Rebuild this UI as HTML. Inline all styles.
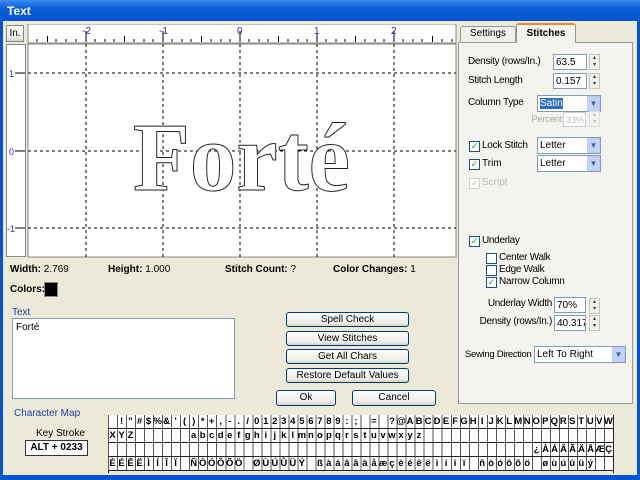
<!DOCTYPE html>
<html><head><meta charset="utf-8"><style>
*{margin:0;padding:0;box-sizing:border-box}
body{width:640px;height:480px;overflow:hidden;background:#ece9d8;font-family:"Liberation Sans",sans-serif;font-size:10px;color:#000;position:relative}
.a{position:absolute}
.n{letter-spacing:-0.3px;white-space:nowrap}
.title{left:0;top:0;width:640px;height:21px;background:linear-gradient(#3d8cf0,#0a5ed8 40%,#0654d0);color:#fff;font-weight:bold;font-size:12px;padding:4px 0 0 7px}
.bl{background:#0654d0}
.btn{position:absolute;border:1px solid #003c74;border-radius:3px;background:linear-gradient(#fff,#ecebe6 80%,#d6d0c5);text-align:center;font-size:10px;line-height:13px}
.inp{position:absolute;background:#fff;border:1px solid #7f9db9;font-size:10px;padding:1px 2px;line-height:13px;white-space:nowrap;overflow:hidden}
.cb{position:absolute;width:11px;height:11px;border:1px solid #1c5180;background:#fff;font-size:9px;line-height:9px;color:#21a121;text-align:center}
.dd{position:absolute;width:13px;height:15px;background:#c1d3fb;border:1px solid #b9cdf7;color:#4d6185;font-size:8px;text-align:center;line-height:13px}
.sp{position:absolute;width:11px;height:16px;border:1px solid #c8c5b8;background:#f3f2ee;font-size:6px;line-height:7px;text-align:center;color:#333}
.row{position:absolute;left:108px;width:505px;height:14px;border-bottom:1px solid #222;background:repeating-linear-gradient(90deg,#555 0 1px,#fff 1px 9.02px);font-family:"Liberation Sans",sans-serif;font-weight:bold;font-size:9.5px;line-height:13px;white-space:pre}
.row span{display:inline-block;width:9.02px;text-align:center}
</style></head><body>
<div class="a title">Text</div>
<div class="a bl" style="left:0;top:21px;width:3px;height:459px"></div>
<div class="a bl" style="left:637px;top:21px;width:3px;height:459px"></div>
<div class="a bl" style="left:0;top:475px;width:640px;height:5px"></div>

<div class="btn" style="left:6px;top:25px;width:18px;height:17px;border-color:#888;border-radius:0;font-size:10px;line-height:15px">In.</div>
<svg class="a" style="left:26px;top:24px" width="432" height="234">
<rect x="2" y="0" width="428" height="19" fill="#fff" stroke="#888"/>
<rect x="2" y="20" width="428" height="213" fill="#fff" stroke="#888"/>
<g stroke="#000" stroke-width="1">
<path d="M60 18v-11M137 18v-11M214 18v-11M291 18v-11M368 18v-11M21.5 18v-6M98.5 18v-6M175.5 18v-6M252.5 18v-6M329.5 18v-6M406.5 18v-6"/>
<path d="M11 18v-3M30 18v-3M40 18v-3M50 18v-3M69 18v-3M79 18v-3M88 18v-3M108 18v-3M118 18v-3M127 18v-3M146 18v-3M156 18v-3M165 18v-3M185 18v-3M195 18v-3M204 18v-3M223 18v-3M233 18v-3M242 18v-3M262 18v-3M272 18v-3M281 18v-3M300 18v-3M310 18v-3M319 18v-3M339 18v-3M349 18v-3M358 18v-3M377 18v-3M387 18v-3M396 18v-3M416 18v-3M426 18v-3"/>
</g>
<g fill="#2030a0" font-size="10" font-family="Liberation Sans"><text x="56" y="10">-2</text><text x="133" y="10">-1</text><text x="211" y="10">0</text><text x="288" y="10">1</text><text x="365" y="10">2</text></g>
<g stroke="#000" stroke-dasharray="3,3"><path d="M60 20v213M137 20v213M214 20v213M291 20v213M368 20v213M2 49h428M2 127h428M2 204h428"/></g>
<text x="107" y="166" font-family="Liberation Serif" font-weight="bold" font-size="98" fill="#fff" stroke="#222" stroke-width="1" textLength="217" lengthAdjust="spacingAndGlyphs">Forté</text>
</svg>
<svg class="a" style="left:6px;top:44px" width="20" height="214">
<rect x="0.5" y="0.5" width="19" height="212" fill="#fff" stroke="#888"/>
<g stroke="#000"><path d="M19 29h-10M19 107h-10M19 184h-10"/></g>
<g fill="#2030a0" font-size="9"><text x="3" y="33">1</text><text x="3" y="111">0</text><text x="1" y="188">-1</text></g>
</svg>

<div class="a" style="left:10px;top:264px;font-weight:bold">Width:<span style="font-weight:normal"> 2.769</span></div>
<div class="a" style="left:108px;top:264px;font-weight:bold">Height:<span style="font-weight:normal"> 1.000</span></div>
<div class="a" style="left:225px;top:264px;font-weight:bold">Stitch Count:<span style="font-weight:normal"> ?</span></div>
<div class="a" style="left:333px;top:264px;font-weight:bold">Color Changes:<span style="font-weight:normal"> 1</span></div>
<div class="a" style="left:10px;top:284px;font-weight:bold">Colors:</div>
<div class="a" style="left:44px;top:282px;width:14px;height:15px;background:#000;border:1px solid #888"></div>
<div class="a" style="left:12px;top:307px;color:#2040a0">Text</div>
<div class="inp" style="left:12px;top:318px;width:223px;height:81px;padding:2px 3px">Forté</div>

<div class="btn" style="left:286px;top:312px;width:123px;height:15px">Spell Check</div>
<div class="btn" style="left:286px;top:331px;width:123px;height:15px">View Stitches</div>
<div class="btn" style="left:286px;top:349px;width:123px;height:15px">Get All Chars</div>
<div class="btn" style="left:286px;top:368px;width:123px;height:15px">Restore Default Values</div>
<div class="btn" style="left:276px;top:390px;width:60px;height:16px">Ok</div>
<div class="btn" style="left:352px;top:390px;width:84px;height:16px">Cancel</div>

<div class="a" style="left:14px;top:408px;color:#2040a0">Character Map</div>
<div class="a" style="left:36px;top:428px">Key Stroke</div>
<div class="a" style="left:25px;top:440px;width:63px;height:16px;background:#fff;border:1px solid #333;text-align:center;font-weight:bold;line-height:14px">ALT + 0233</div>

<div class="a" style="left:108px;top:415px;width:506px;height:58px;border:1px solid #222;border-bottom:none"></div>
<div class="row" style="top:415px"><span> </span><span>!</span><span>"</span><span>#</span><span>$</span><span>%</span><span>&amp;</span><span>'</span><span>(</span><span>)</span><span>*</span><span>+</span><span>,</span><span>-</span><span>.</span><span>/</span><span>0</span><span>1</span><span>2</span><span>3</span><span>4</span><span>5</span><span>6</span><span>7</span><span>8</span><span>9</span><span>:</span><span>;</span><span> </span><span>=</span><span> </span><span>?</span><span>@</span><span>A</span><span>B</span><span>C</span><span>D</span><span>E</span><span>F</span><span>G</span><span>H</span><span>I</span><span>J</span><span>K</span><span>L</span><span>M</span><span>N</span><span>O</span><span>P</span><span>Q</span><span>R</span><span>S</span><span>T</span><span>U</span><span>V</span><span>W</span></div>
<div class="row" style="top:429px"><span>X</span><span>Y</span><span>Z</span><span> </span><span> </span><span> </span><span> </span><span> </span><span> </span><span>a</span><span>b</span><span>c</span><span>d</span><span>e</span><span>f</span><span>g</span><span>h</span><span>i</span><span>j</span><span>k</span><span>l</span><span>m</span><span>n</span><span>o</span><span>p</span><span>q</span><span>r</span><span>s</span><span>t</span><span>u</span><span>v</span><span>w</span><span>x</span><span>y</span><span>z</span></div>
<div class="row" style="top:443px"><span style="margin-left:424px">¿</span><span>À</span><span>Á</span><span>Â</span><span>Ã</span><span>Ä</span><span>Å</span><span>Æ</span><span>Ç</span></div>
<div class="row" style="top:457px"><span>È</span><span>É</span><span>Ê</span><span>Ë</span><span>Ì</span><span>Í</span><span>Î</span><span>Ï</span><span> </span><span>Ñ</span><span>Ò</span><span>Ó</span><span>Ô</span><span>Õ</span><span>Ö</span><span> </span><span>Ø</span><span>Ù</span><span>Ú</span><span>Û</span><span>Ü</span><span>Ý</span><span> </span><span>ß</span><span>à</span><span>á</span><span>â</span><span>ã</span><span>ä</span><span>å</span><span>æ</span><span>ç</span><span>è</span><span>é</span><span>ê</span><span>ë</span><span>ì</span><span>í</span><span>î</span><span>ï</span><span> </span><span>ñ</span><span>ò</span><span>ó</span><span>ô</span><span>õ</span><span>ö</span><span> </span><span>ø</span><span>ù</span><span>ú</span><span>û</span><span>ü</span><span>ý</span></div>

<!-- right panel -->
<div class="a" style="left:458px;top:42px;width:175px;height:362px;border:1px solid #919b9c;background:#f4f3ee"></div>
<div class="a" style="left:460px;top:26px;width:56px;height:16px;border:1px solid #919b9c;border-bottom:none;border-radius:3px 3px 0 0;background:#f0efe9;text-align:center;line-height:14px">Settings</div>
<div class="a" style="left:516px;top:23px;width:60px;height:20px;border:1px solid #919b9c;border-top:2px solid #e68b2c;border-bottom:none;border-radius:3px 3px 0 0;background:#f4f3ee;text-align:center;font-weight:bold;line-height:18px">Stitches</div>

<div class="a n" style="left:468px;top:56px">Density (rows/In.)</div>
<div class="inp" style="left:553px;top:54px;width:34px;height:16px">63.5</div>
<div class="sp" style="left:589px;top:54px">▴<br>▾</div>
<div class="a n" style="left:468px;top:75px">Stitch Length</div>
<div class="inp" style="left:553px;top:73px;width:34px;height:16px">0.157</div>
<div class="sp" style="left:589px;top:73px">▴<br>▾</div>
<div class="a n" style="left:468px;top:97px">Column Type</div>
<div class="inp" style="left:537px;top:95px;width:64px;height:17px"><span style="background:#316ac5;color:#fff">Satin</span></div>
<div class="dd" style="left:587px;top:96px">▼</div>
<div class="a n" style="right:78px;top:114px;color:#aaa;font-size:9.5px">Percent</div>
<div class="inp" style="left:563px;top:112px;width:23px;height:15px;border-color:#ccc;color:#bbb;font-size:9px">33%</div>
<div class="sp" style="left:589px;top:111px;border-color:#ddd;color:#bbb">▴<br>▾</div>

<div class="cb" style="left:469px;top:141px">✓</div><div class="a n" style="left:482px;top:140px">Lock Stitch</div>
<div class="inp" style="left:537px;top:137px;width:64px;height:17px">Letter</div><div class="dd" style="left:587px;top:138px">▼</div>
<div class="cb" style="left:469px;top:159px">✓</div><div class="a" style="left:482px;top:158px">Trim</div>
<div class="inp" style="left:537px;top:155px;width:64px;height:17px">Letter</div><div class="dd" style="left:587px;top:156px">▼</div>
<div class="cb" style="left:469px;top:178px;border-color:#ccc;color:#bbb">✓</div><div class="a" style="left:482px;top:177px;color:#bbb">Script</div>

<div class="cb" style="left:469px;top:236px">✓</div><div class="a n" style="left:482px;top:235px">Underlay</div>
<div class="cb" style="left:486px;top:253px"></div><div class="a n" style="left:499px;top:252px">Center Walk</div>
<div class="cb" style="left:486px;top:265px"></div><div class="a n" style="left:499px;top:264px">Edge Walk</div>
<div class="cb" style="left:486px;top:277px">✓</div><div class="a n" style="left:499px;top:276px">Narrow Column</div>
<div class="a n" style="right:88px;top:298px">Underlay Width</div>
<div class="inp" style="left:554px;top:297px;width:32px;height:16px">70%</div>
<div class="sp" style="left:589px;top:298px">▴<br>▾</div>
<div class="a n" style="right:88px;top:316px">Density (rows/In.)</div>
<div class="inp" style="left:554px;top:315px;width:32px;height:16px">40.317</div>
<div class="sp" style="left:589px;top:315px">▴<br>▾</div>
<div class="a n" style="left:465px;top:349px;font-size:9.5px">Sewing Direction</div>
<div class="inp" style="left:534px;top:346px;width:92px;height:17px">Left To Right</div>
<div class="dd" style="left:612px;top:347px">▼</div>
</body></html>
